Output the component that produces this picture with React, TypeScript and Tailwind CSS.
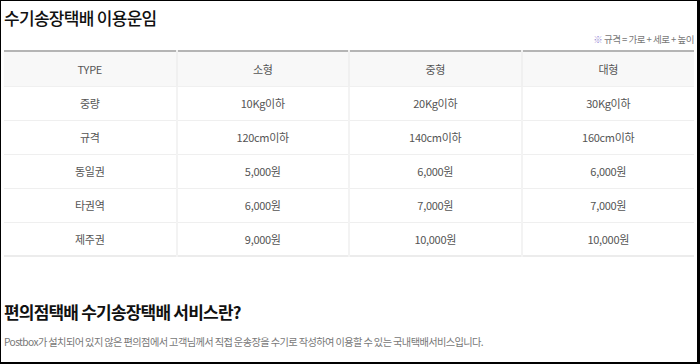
const rows: { label: string; values: string[] }[] = [
  { label: "중량", values: ["10Kg이하", "20Kg이하", "30Kg이하"] },
  { label: "규격", values: ["120cm이하", "140cm이하", "160cm이하"] },
  { label: "동일권", values: ["5,000원", "6,000원", "6,000원"] },
  { label: "타권역", values: ["6,000원", "7,000원", "7,000원"] },
  { label: "제주권", values: ["9,000원", "10,000원", "10,000원"] },
];

const heads = ["TYPE", "소형", "중형", "대형"];

export default function App() {
  return (
    <div
      className="w-[700px] h-[364px] overflow-hidden bg-white border-l border-t border-r-[3px] border-b-2 border-black"
      style={{ fontFamily: '"Noto Sans CJK KR", "Noto Sans", sans-serif' }}
    >
      <div className="pl-[3px] pr-[3px]">
        <h2 className="pt-[5px] text-[17px] leading-[24px] font-medium text-[#111] tracking-[-0.7px]">
          수기송장택배 이용운임
        </h2>
        <p className="mt-[2px] text-right text-[9.5px] leading-[14px] text-[#777] tracking-[-0.5px]">
          <span className="text-[#9b8fd6]">※</span> 규격 = 가로 + 세로 + 높이
        </p>
        <table className="mt-[4px] w-full table-fixed border-collapse border-t-2 border-t-[#b5b5b5] border-b-2 border-b-[#ececec] text-[11px] text-[#555] tracking-[-0.3px]">
          <thead>
            <tr className="bg-[#f8f8f8]">
              {heads.map((h, i) => (
                <th
                  key={h}
                  className={
                    "h-[35px] font-normal text-center border-b border-b-[#f0f0f0] " +
                    (i > 0 ? "border-l-2 border-l-[#f0f0f0]" : "")
                  }
                >
                  {h}
                </th>
              ))}
            </tr>
          </thead>
          <tbody>
            {rows.map((r, ri) => (
              <tr key={r.label} className={ri > 0 ? "border-t border-t-[#efefef]" : ""}>
                <td className="h-[34px] text-center">{r.label}</td>
                {r.values.map((v, i) => (
                  <td key={i} className="h-[34px] text-center border-l-2 border-l-[#f3f3f3]">
                    {v}
                  </td>
                ))}
              </tr>
            ))}
          </tbody>
        </table>
        <h2 className="mt-[43px] text-[17px] leading-[24px] font-bold text-[#111] tracking-[-0.8px]">
          편의점택배 수기송장택배 서비스란?
        </h2>
        <p className="mt-[10px] text-[10.2px] leading-[16px] text-[#777] tracking-[-0.6px]">
          Postbox가 설치되어 있지 않은 편의점에서 고객님께서 직접 운송장을 수기로 작성하여 이용할 수 있는 국내택배서비스입니다.
        </p>
      </div>
    </div>
  );
}
